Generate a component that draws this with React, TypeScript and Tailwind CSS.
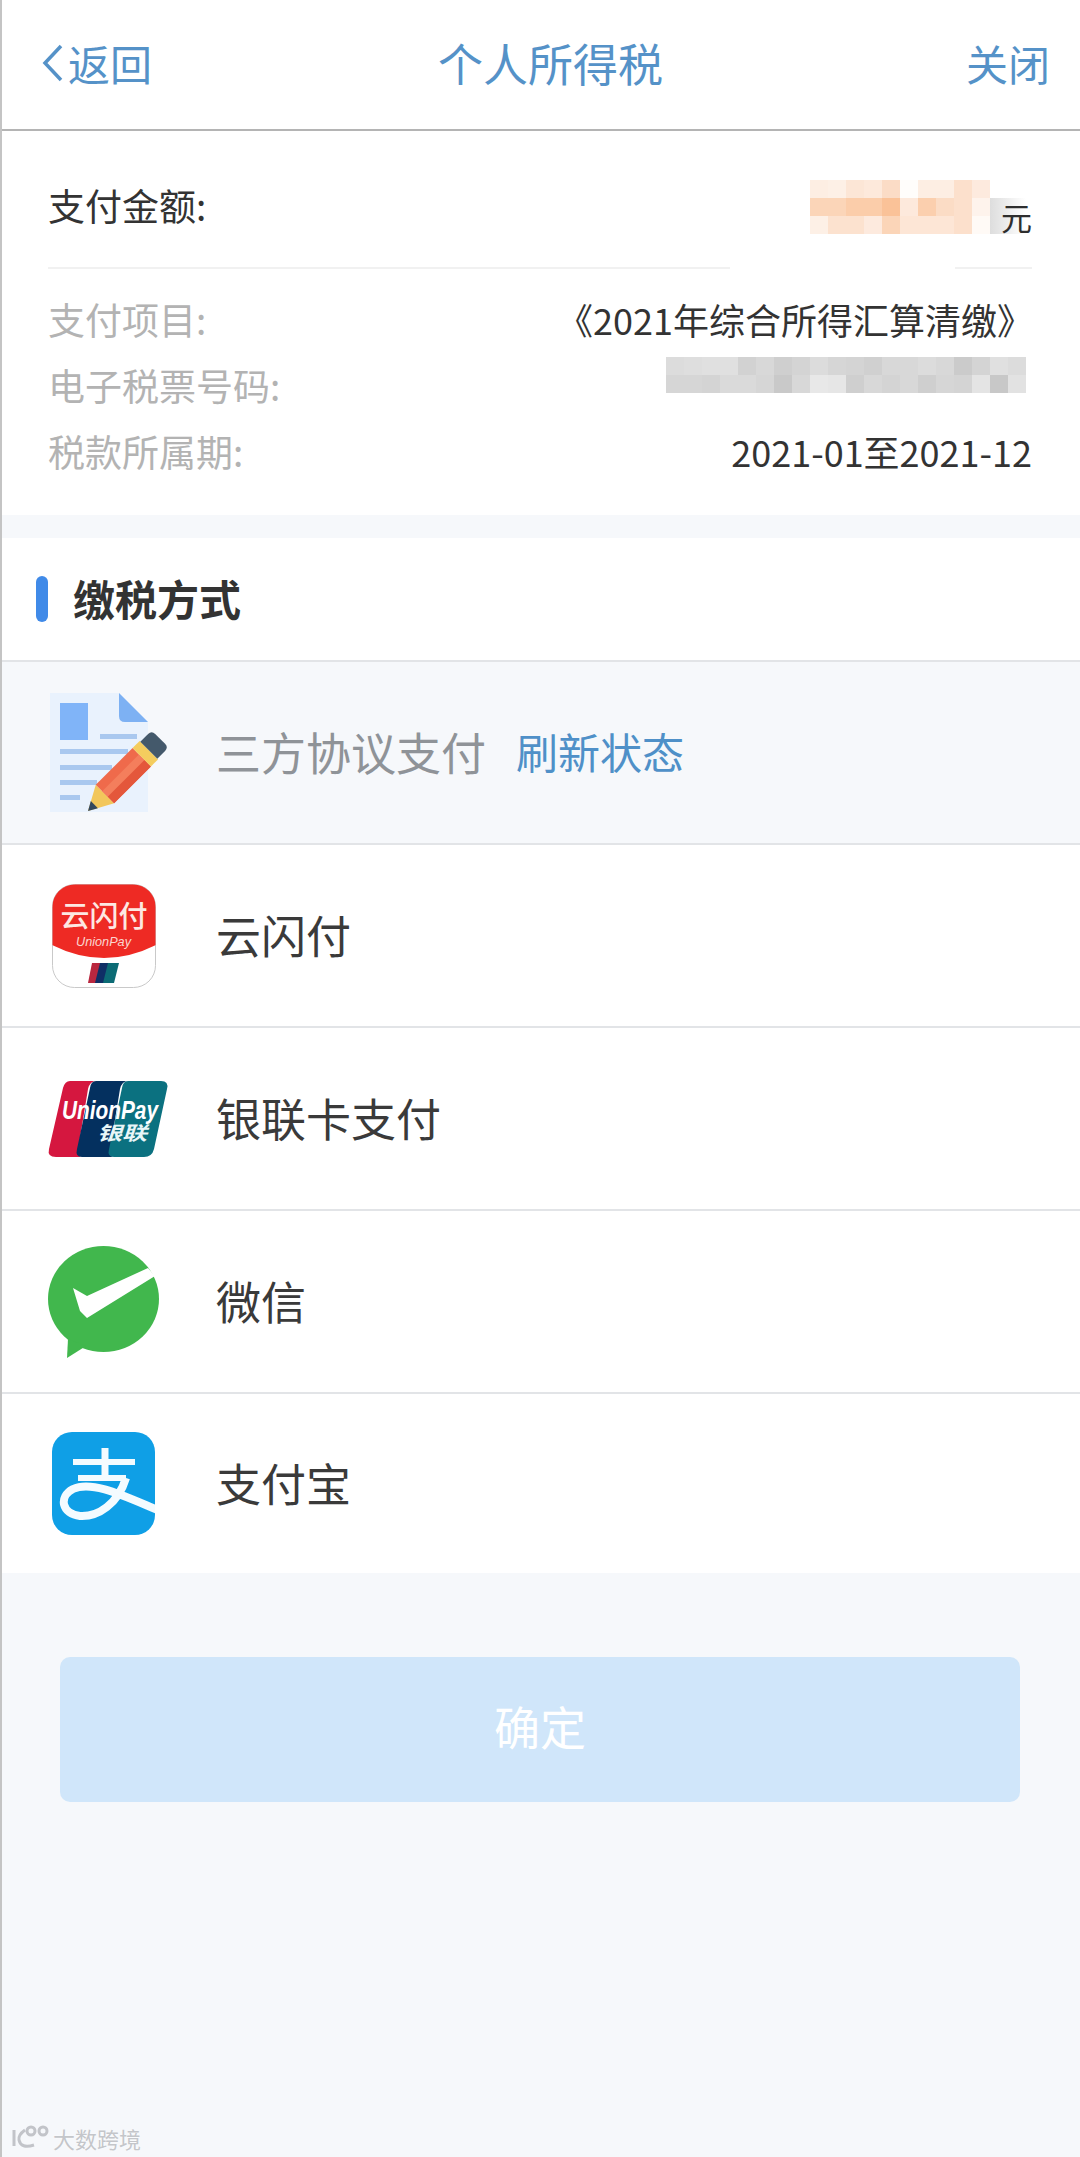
import React from "react";

const orange = [
  ["#fdeee3","#fdf0e6","#fce6d6","#fde9db","#fbdcc6","#fffdfb","#fdeee3","#fdeee3","#fce0cc","#fdeade"],
  ["#fbd5b8","#fbd5b8","#fbcdaa","#fbcdaa","#fac298","#fde9dc","#fbcfae","#fbdcc5","#fce0cc","#fef3ec"],
  ["#fdf0e6","#fce2cf","#fce2cf","#fdeade","#fbd5b8","#fde6d6","#fde6d6","#fde6d6","#fce0cc","#fffaf6"],
];
const grayTop = ["#dcdcdc","#dedede","#e0e0e0","#e0e0e0","#d2d2d2","#d8d8d8","#cfcfcf","#d4d4d4","#dcdcdc","#d6d6d6","#d4d4d4","#d0d0d0","#d8d8d8","#d8d8d8","#dcdcdc","#d8d8d8","#cbcbcb","#d4d4d4","#e0e0e0","#dcdcdc"];
const grayBottom = ["#d6d6d6","#d6d6d6","#d4d4d4","#dadada","#dadada","#d6d6d6","#c9c9c9","#d8d8d8","#e8e8e8","#e6e6e6","#cfcfcf","#d8d8d8","#d4d4d4","#d8d8d8","#cfcfcf","#d6d6d6","#d4d4d4","#e4e4e4","#c8c8c8","#e2e2e2"];

function Mosaic({ rows, cell }: { rows: string[][]; cell: number }) {
  return (
    <div className="flex flex-col">
      {rows.map((r, i) => (
        <div key={i} className="flex">
          {r.map((c, j) => (
            <div key={j} style={{ width: cell, height: cell, backgroundColor: c }} />
          ))}
        </div>
      ))}
    </div>
  );
}

function InfoRow({ label, children }: { label: string; children: React.ReactNode }) {
  return (
    <div className="h-[66px] flex items-center justify-between">
      <span className="text-[37px] text-[#b3b3b3]">{label}</span>
      {children}
    </div>
  );
}

function DocIcon() {
  return (
    <svg width="130" height="125" viewBox="45 690 130 125" className="ml-[43px]">
      <path d="M50 693H119L148 722V812H50Z" fill="#e9f2fd" />
      <path d="M119 693L148 722H125Q119 722 119 716Z" fill="#7db1f3" />
      <rect x="60" y="703" width="28" height="37" fill="#80b4f8" />
      <rect x="100" y="734" width="37" height="5" fill="#a9c8ef" />
      <rect x="60" y="749" width="68" height="5" fill="#a9c8ef" />
      <rect x="60" y="765" width="52" height="5" fill="#a9c8ef" />
      <rect x="60" y="780" width="37" height="5" fill="#a9c8ef" />
      <rect x="60" y="795" width="20" height="5" fill="#a9c8ef" />
      <g transform="translate(88 811) rotate(-45)">
        <path d="M0 0L24 -13V13Z" fill="#f2c75c" />
        <path d="M0 0L9 -5V5Z" fill="#34495e" />
        <rect x="24" y="-13" width="52" height="26" fill="#ef6a4b" />
        <rect x="24" y="-4" width="52" height="8" fill="#f47e5c" />
        <rect x="24" y="4" width="52" height="9" fill="#e4573b" />
        <rect x="76" y="-13" width="10" height="26" fill="#f4cd5e" />
        <path d="M86 -12H97Q102 -12 102 -7V7Q102 12 97 12H86Z" fill="#44596b" />
      </g>
    </svg>
  );
}

function CloudPayIcon() {
  return (
    <svg width="104" height="104" viewBox="52 883 104 104" className="ml-[50px]">
      <defs>
        <clipPath id="cp"><rect x="52.5" y="883.5" width="103" height="103" rx="22" /></clipPath>
      </defs>
      <rect x="52.5" y="883.5" width="103" height="103" rx="22" fill="#fff" stroke="#c9c9c9" />
      <g clipPath="url(#cp)">
        <path d="M50 880H158V943Q104 971 50 943Z" fill="#ee2a24" />
        <path d="M92 962H103L98 982H88Z" fill="#b9273f" />
        <path d="M100 962H111L106 982H95Z" fill="#0f2f66" />
        <path d="M108 962H119L114 982H103Z" fill="#0c6b75" />
      </g>
      <text x="104" y="926" textAnchor="middle" fill="#fde8e2" fontSize="29" fontWeight="500" fontFamily="'Noto Sans CJK SC', sans-serif">云闪付</text>
      <text x="76" y="945" fill="#fbd6cf" fontSize="13" fontStyle="italic" textLength="55" lengthAdjust="spacingAndGlyphs" fontFamily="'Liberation Sans', sans-serif">UnionPay</text>
    </svg>
  );
}

function UnionPayIcon() {
  return (
    <svg width="124" height="78" viewBox="46 1080 124 78" className="ml-[44px] overflow-visible">
      <path d="M70 1081H96Q90 1081 88 1089L78 1150Q77 1157 82 1157H56Q47 1157 49 1149L63 1088Q65 1081 70 1081Z" fill="#d5173f" />
      <path d="M96 1081H128Q122 1081 120 1089L110 1150Q109 1157 114 1157H82Q75 1157 77 1149L90 1088Q91 1081 96 1081Z" fill="#04305f" />
      <path d="M128 1081H161Q169 1081 167 1089L154 1149Q152 1157 144 1157H114Q107 1157 109 1149L122 1088Q123 1081 128 1081Z" fill="#0b7180" />
      <text x="62" y="1119" fill="#fff" fontSize="25" fontWeight="700" fontStyle="italic" textLength="96" lengthAdjust="spacingAndGlyphs" fontFamily="'Liberation Sans', sans-serif">UnionPay</text>
      <text x="97" y="1140" fill="#e8f6f8" fontSize="19" fontWeight="700" fontStyle="italic" textLength="50" lengthAdjust="spacingAndGlyphs" fontFamily="'Noto Sans CJK SC', sans-serif">银联</text>
    </svg>
  );
}

function WeChatIcon() {
  return (
    <svg width="116" height="116" viewBox="46 1243 116 116" className="ml-[44px]">
      <ellipse cx="103.5" cy="1298" rx="55.5" ry="53" fill="#41b74d" />
      <path d="M68 1338L67 1357L86 1345Z" fill="#41b74d" />
      <path d="M73 1287L87 1295L148 1267L155 1275L87 1317L80 1310Z" fill="#fff" />
    </svg>
  );
}

function AlipayIcon() {
  return (
    <svg width="104" height="104" viewBox="52 1432 104 104" className="ml-[50px]">
      <defs>
        <clipPath id="ap"><rect x="52" y="1432" width="103" height="103" rx="20" /></clipPath>
      </defs>
      <rect x="52" y="1432" width="103" height="103" rx="20" fill="#0f9fe6" />
      <g clipPath="url(#ap)">
        <g fill="none" stroke="#f4fbff" strokeWidth="6">
          <path d="M73 1462H135" />
          <path d="M105 1448V1477" strokeWidth="7" />
          <path d="M78 1478H126" />
          <path d="M126 1478C118 1504 98 1517 80 1516C62 1514 58 1497 73 1489C92 1480 124 1496 160 1511" strokeWidth="8" />
        </g>
      </g>
    </svg>
  );
}

function PayRow({ icon, label, grey, extra, h = "h-[183px]" }: { icon: React.ReactNode; label: string; grey?: boolean; extra?: React.ReactNode; h?: string }) {
  return (
    <div className={`${h} border-t-2 border-[#e2e4e7] flex items-center ${grey ? "bg-[#f6f8fb]" : "bg-white"}`}>
      <div className="w-[214px] shrink-0 flex items-center">{icon}</div>
      <span className={`text-[45px] leading-none pb-[3px] ${grey ? "text-[#8f9398]" : "text-[#3a3a3a]"}`}>{label}</span>
      {extra}
    </div>
  );
}

export default function App() {
  return (
    <div
      className="w-[1080px] h-[2157px] relative overflow-hidden bg-[#f6f8fb] border-l-2 border-[#c4c4c4]"
      style={{ fontFamily: "'Noto Sans CJK SC', 'Noto Sans', sans-serif" }}
    >
      <header className="h-[131px] bg-white border-b-2 border-[#b4b4b4] flex items-center justify-between pl-[39px] pr-[30px] pb-[4px]">
        <div className="flex items-center text-[42px] leading-none text-[#5592c8]">
          <svg width="24" height="38" viewBox="0 0 24 38" className="mr-[3px]">
            <path d="M20 2L4 19L20 36" fill="none" stroke="#5592c8" strokeWidth="3.5" />
          </svg>
          返回
        </div>
        <div className="text-[45px] leading-none text-[#5592c8] mr-[17px]">个人所得税</div>
        <div className="text-[42px] leading-none text-[#5592c8]">关闭</div>
      </header>

      <section className="h-[384px] bg-white pl-[46px] pr-[48px] text-[36px] leading-none">
        <div className="h-[136px] flex justify-between items-start">
          <span className="text-[37px] text-[#333] mt-[56px]">支付金额:</span>
          <div className="flex mt-[49px]">
            <Mosaic rows={orange} cell={18} />
            <div className="w-[36px] h-[36px] mt-[18px] bg-gradient-to-r from-[#dddddd] to-[#ffffff] flex items-center justify-end">
              <span className="text-[31px] text-[#2e2e2e] leading-none -mr-[6px]">元</span>
            </div>
            <div className="w-[6px]" />
          </div>
        </div>
        <div className="flex h-[2px]">
          <div className="w-[682px] bg-[#f1f1f1]" />
          <div className="w-[225px]" />
          <div className="flex-1 bg-[#f1f1f1]" />
        </div>
        <div className="pt-[17px]">
          <InfoRow label="支付项目:">
            <span className="text-[#333] -mr-[1px]">《2021年综合所得汇算清缴》</span>
          </InfoRow>
          <InfoRow label="电子税票号码:">
            <div className="mr-[6px] mb-[20px]">
              <Mosaic rows={[grayTop, grayBottom]} cell={18} />
            </div>
          </InfoRow>
          <InfoRow label="税款所属期:">
            <span className="text-[#333]">2021-01至2021-12</span>
          </InfoRow>
        </div>
      </section>

      <div className="h-[23px]" />

      <div className="h-[122px] bg-white flex items-center pl-[34px]">
        <div className="w-[12px] h-[46px] rounded-full bg-[#408ae8]" />
        <span className="ml-[25px] pb-[2px] text-[42px] leading-none font-bold text-[#333]">缴税方式</span>
      </div>

      <PayRow
        grey
        icon={<DocIcon />}
        label="三方协议支付"
        extra={<span className="ml-[30px] pb-[3px] text-[42px] leading-none text-[#4f90c8]">刷新状态</span>}
      />
      <PayRow icon={<CloudPayIcon />} label="云闪付" />
      <PayRow icon={<UnionPayIcon />} label="银联卡支付" />
      <PayRow icon={<WeChatIcon />} label="微信" />
      <PayRow icon={<AlipayIcon />} label="支付宝" h="h-[181px]" />

      <div className="pt-[84px] pl-[58px]">
        <button className="w-[960px] h-[145px] rounded-[10px] bg-[#d0e6fa] text-white text-[46px] leading-none pb-[10px]">确定</button>
      </div>

      <div className="absolute left-[8px] bottom-[5px] flex items-center gap-[3px]">
        <svg width="40" height="28" viewBox="0 0 40 28">
          <g fill="none" stroke="#c2c4c9" strokeWidth="3">
            <path d="M4 6V22" />
            <path d="M15 6Q8 11 9 16Q11 25 24 21" />
            <circle cx="21" cy="7" r="4" />
            <circle cx="33" cy="7" r="4" />
          </g>
        </svg>
        <span className="text-[22px] leading-none text-[#c4c6ca] [text-shadow:0_0_2px_#ffffff]">大数跨境</span>
      </div>
    </div>
  );
}
